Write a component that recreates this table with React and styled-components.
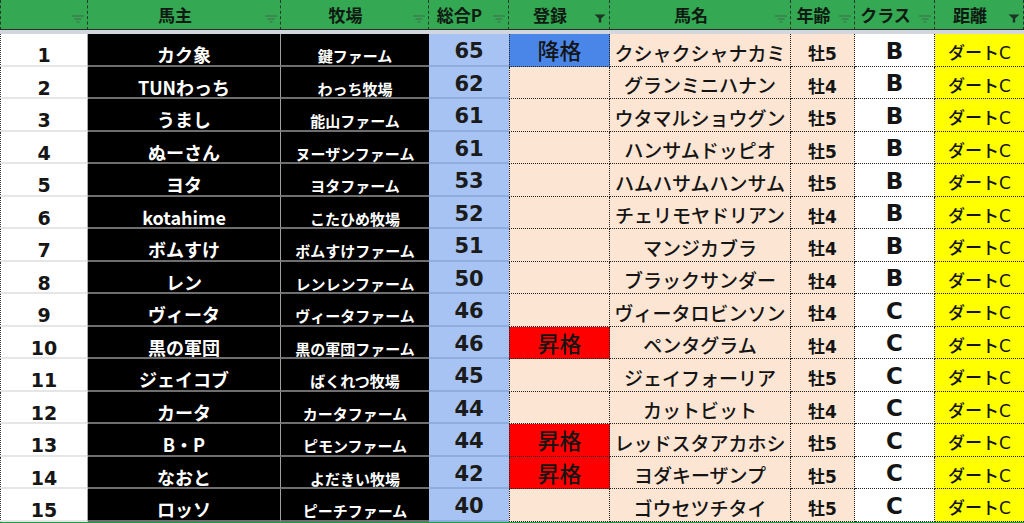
import styled, { createGlobalStyle } from "styled-components";

const COLUMNS = [
  { label: "", filter: "idle" },
  { label: "馬主", filter: "idle" },
  { label: "牧場", filter: "idle" },
  { label: "総合P", filter: "idle" },
  { label: "登録", filter: "applied" },
  { label: "馬名", filter: "idle" },
  { label: "年齢", filter: "idle" },
  { label: "クラス", filter: "idle" },
  { label: "距離", filter: "applied" },
];

const ROWS = [
  [1, "カク象", "鍵ファーム", 65, "降格", "クシャクシャナカミ", "牡5", "B"],
  [2, "TUNわっち", "わっち牧場", 62, "", "グランミニハナン", "牡4", "B"],
  [3, "うまし", "能山ファーム", 61, "", "ウタマルショウグン", "牡5", "B"],
  [4, "ぬーさん", "ヌーザンファーム", 61, "", "ハンサムドッピオ", "牡5", "B"],
  [5, "ヨタ", "ヨタファーム", 53, "", "ハムハサムハンサム", "牡5", "B"],
  [6, "kotahime", "こたひめ牧場", 52, "", "チェリモヤドリアン", "牡4", "B"],
  [7, "ボムすけ", "ボムすけファーム", 51, "", "マンジカブラ", "牡4", "B"],
  [8, "レン", "レンレンファーム", 50, "", "ブラックサンダー", "牡4", "B"],
  [9, "ヴィータ", "ヴィータファーム", 46, "", "ヴィータロビンソン", "牡4", "C"],
  [10, "黒の軍団", "黒の軍団ファーム", 46, "昇格", "ペンタグラム", "牡4", "C"],
  [11, "ジェイコブ", "ばくれつ牧場", 45, "", "ジェイフォーリア", "牡5", "C"],
  [12, "カータ", "カータファーム", 44, "", "カットビット", "牡4", "C"],
  [13, "B・P", "ピモンファーム", 44, "昇格", "レッドスタアカホシ", "牡5", "C"],
  [14, "なおと", "よだきい牧場", 42, "昇格", "ヨダキーザンプ", "牡5", "C"],
  [15, "ロッソ", "ピーチファーム", 40, "", "ゴウセツチタイ", "牡5", "C"],
];

const ENTRY_TONES = {
  降格: "#4a86e8",
  昇格: "#ff0000",
};

const PEACH = "#fce5d3";

const FilterIcon = ({ applied }) =>
  applied ? (
    <svg width="12" height="9" viewBox="0 0 12 9">
      <path d="M0.5 0.5 H11.5 L7.2 4.6 V8.5 H4.8 V4.6 Z" fill="#1d3524" />
    </svg>
  ) : (
    <svg width="12" height="8" viewBox="0 0 12 8">
      <path d="M0 1 H12 M2.5 4 H9.5 M4.5 7 H7.5" stroke="#3f6b4a" strokeWidth="1" />
    </svg>
  );

export default function App() {
  return (
    <>
      <GlobalStyle />
      <Sheet>
        {COLUMNS.map((col, i) => (
          <HeaderCell key={i} $first={i === 0}>
            <HeaderLabel>{col.label}</HeaderLabel>
            <FilterSlot>
              <FilterIcon applied={col.filter === "applied"} />
            </FilterSlot>
          </HeaderCell>
        ))}
        <HeaderRule />
        {ROWS.map(([rank, owner, farm, points, entry, horse, age, grade]) => (
          <Row key={rank}>
            <RankCell>{rank}</RankCell>
            <OwnerCell>{owner}</OwnerCell>
            <FarmCell>{farm}</FarmCell>
            <PointCell>{points}</PointCell>
            <EntryCell $tone={ENTRY_TONES[entry]}>{entry}</EntryCell>
            <HorseCell>{horse}</HorseCell>
            <AgeCell>{age}</AgeCell>
            <ClassCell>{grade}</ClassCell>
            <DistanceCell>ダートC</DistanceCell>
          </Row>
        ))}
        <BottomRule />
      </Sheet>
    </>
  );
}

const GlobalStyle = createGlobalStyle`
  html, body {
    margin: 0;
    padding: 0;
    background: #ffffff;
  }
  body {
    font-family: "DejaVu Sans", "Noto Sans CJK JP", sans-serif;
    color: #111;
  }
`;

const Sheet = styled.div`
  width: 1024px;
  height: 523px;
  overflow: hidden;
  display: grid;
  grid-template-columns: 88px 193px 148px 80px 101px 181px 64px 80px 89px;
  grid-template-rows: 30px 4px repeat(15, 32.5px) 2px;
`;

const HeaderCell = styled.div`
  box-sizing: border-box;
  display: grid;
  grid-template-columns: 1fr 18px;
  background: #34a853;
  border-right: 1px dashed #1f3a27;
  border-left: ${({ $first }) => ($first ? "1px dashed #1f3a27" : "0")};
  border-bottom: 1px solid #2b2b2b;
`;

const HeaderLabel = styled.span`
  align-self: center;
  justify-self: center;
  white-space: nowrap;
  font-family: "Noto Sans CJK JP", sans-serif;
  font-size: 17px;
  font-weight: 700;
  line-height: 1;
  color: #0f1a12;
`;

const FilterSlot = styled.span`
  display: flex;
  align-self: end;
  justify-content: center;
  padding-bottom: 6px;
`;

const HeaderRule = styled.div`
  grid-column: 1 / -1;
  background: #d3d6dc;
`;

const BottomRule = styled.div`
  grid-column: 1 / -1;
  background: #1f9a3f;
`;

const Row = styled.div`
  display: contents;
`;

const Cell = styled.div`
  box-sizing: border-box;
  display: flex;
  align-items: center;
  justify-content: center;
  white-space: nowrap;
  line-height: 1;
`;

const RankCell = styled(Cell)`
  background: #ffffff;
  border-left: 1px dotted #333;
  border-right: 1px solid #a8a8a8;
  border-bottom: 2px solid #e6e6e6;
  padding-top: 13px;
  font-size: 19px;
  font-weight: 700;
  color: #161616;
`;

const OwnerCell = styled(Cell)`
  background: #000000;
  color: #ffffff;
  border-right: 1px solid #a0a0a0;
  border-bottom: 2px solid #6e6e6e;
  padding-top: 10px;
  font-family: "Noto Sans CJK JP", sans-serif;
  font-size: 18px;
  font-weight: 700;
`;

const FarmCell = styled(OwnerCell)`
  border-right: 0;
  padding-top: 13px;
  font-size: 15px;
`;

const PointCell = styled(Cell)`
  background: #a6c3f3;
  border-bottom: 2px solid #8eacde;
  padding-top: 5px;
  font-size: 21px;
  font-weight: 700;
  color: #1b1b1b;
`;

const EntryCell = styled(Cell)`
  background: ${({ $tone }) => $tone || PEACH};
  border-left: 1px dotted #222;
  border-right: 1px dotted #222;
  border-bottom: 1px dotted #222;
  padding-bottom: 1px;
  font-family: "Noto Sans CJK JP", sans-serif;
  font-size: 22px;
  font-weight: 500;
  color: #141414;
`;

const HorseCell = styled(Cell)`
  background: ${PEACH};
  border-right: 1px dotted #222;
  border-bottom: 1px dotted #222;
  padding-top: 5px;
  font-family: "Noto Sans CJK JP", sans-serif;
  font-size: 19px;
  font-weight: 500;
  color: #141414;
`;

const AgeCell = styled(Cell)`
  background: ${PEACH};
  border-right: 1px dotted #222;
  border-bottom: 1px dotted #222;
  padding-top: 10px;
  font-size: 17px;
  font-weight: 700;
  color: #141414;
`;

const ClassCell = styled(Cell)`
  background: #ffffff;
  border-right: 1px dotted #222;
  border-bottom: 1px dotted #222;
  padding-top: 3px;
  font-size: 23px;
  font-weight: 700;
  color: #141414;
`;

const DistanceCell = styled(Cell)`
  background: #ffff00;
  border-bottom: 1px dotted #222;
  padding-top: 8px;
  font-family: "DejaVu Sans", "Noto Sans CJK JP", sans-serif;
  font-size: 17px;
  font-weight: 500;
  color: #141414;
`;
